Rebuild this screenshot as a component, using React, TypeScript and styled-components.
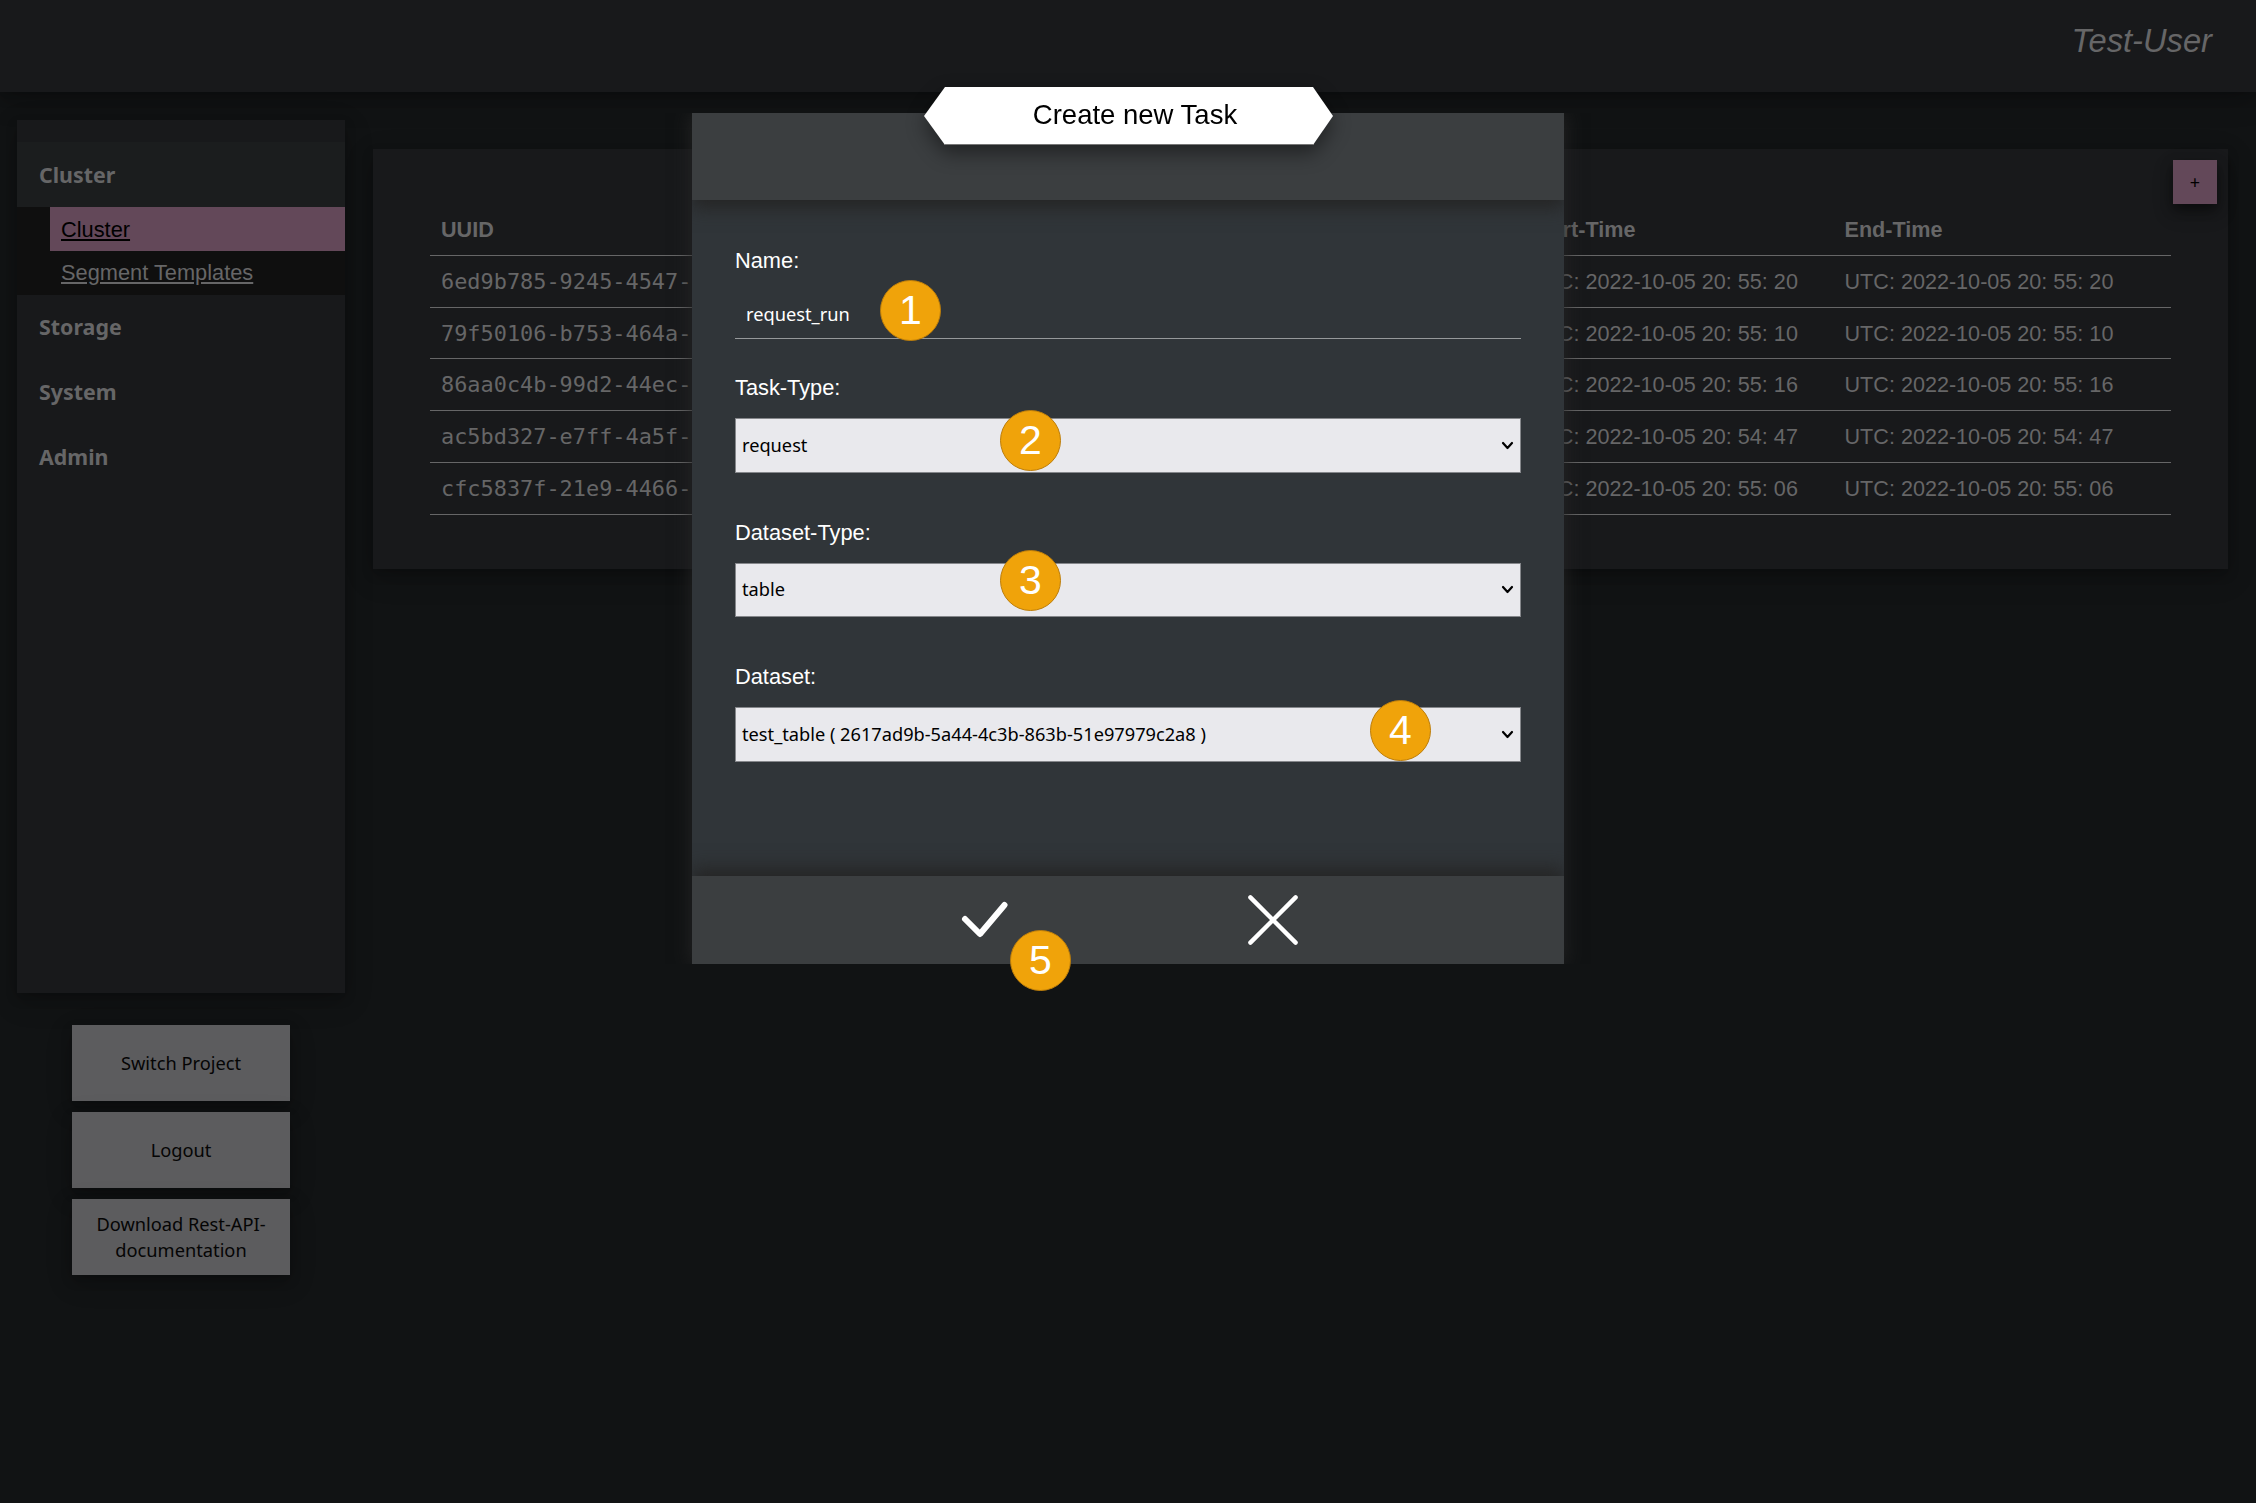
import React from "react";
import styled, { createGlobalStyle } from "styled-components";

const sans = `"Liberation Sans", Arial, sans-serif`;
const noto = `"Noto Sans", sans-serif`;
const elevation = "0 5px 11px rgba(0, 0, 0, 0.2), 0 8px 27px rgba(0, 0, 0, 0.19)";

const GlobalStyle = createGlobalStyle`
  * { box-sizing: border-box; }
  html { background: #fff; }
  body { margin: 0; font-family: ${sans}; font-size: 21.8px; color: #666667; }
  button, input { font: inherit; color: inherit; border: 0; padding: 0; margin: 0; }
`;

const Page = styled.div`
  position: relative;
  width: 2256px;
  height: 1503px;
  overflow: hidden;
  background: #111314;
`;

const Header = styled.header`
  display: flex;
  justify-content: flex-end;
  height: 92px;
  padding: 22px 44px 0 0;
  background: #18191b;
  box-shadow: ${elevation};
  font-size: 32.7px;
  line-height: 38px;
  font-style: italic;
`;

const Columns = styled.div`
  display: flex;
  align-items: flex-start;
  padding: 28px 28px 0 17px;
`;

const Left = styled.aside`
  width: 328px;
  margin-right: 28px;
`;

const Sidebar = styled.nav`
  height: 872.5px;
  padding-top: 22px;
  background: #18191b;
  box-shadow: ${elevation};
`;

const Group = styled.div<{ $open?: boolean }>`
  height: 65.4px;
  padding-left: 22px;
  font-family: ${noto};
  font-weight: 700;
  font-size: 21.4px;
  line-height: ${(p) => (p.$open ? 65 : 64.4)}px;
  background: ${(p) => (p.$open ? "#1b1d1e" : "transparent")};
`;

const SubMenu = styled.div`
  height: 87.2px;
  padding-left: 33px;
  background: #0f0f0f;
`;

const SubItem = styled.div<{ $active?: boolean }>`
  height: ${(p) => (p.$active ? 44 : 43)}px;
  padding-left: 11px;
  line-height: ${(p) => (p.$active ? 45 : 43)}px;
  text-decoration: underline;
  background: ${(p) => (p.$active ? "#634859" : "transparent")};
  color: ${(p) => (p.$active ? "#000" : "inherit")};
`;

const Actions = styled.div`
  display: flex;
  flex-direction: column;
  gap: 11px;
  width: 218px;
  margin: 32px 0 0 55px;
`;

const Action = styled.button`
  height: 76.3px;
  padding: 0 20px;
  background: #5c5c5e;
  color: #050505;
  font-family: ${noto};
  font-size: 18.25px;
  line-height: 26px;
  box-shadow: ${elevation};
`;

const Panel = styled.main`
  position: relative;
  flex: 1;
  height: 420px;
  margin-top: 29px;
  padding: 55px 57px 0 57px;
  background: #18191b;
  box-shadow: ${elevation};
`;

const AddButton = styled.button`
  position: absolute;
  top: 11px;
  right: 11px;
  width: 44px;
  height: 44px;
  background: #634859;
  color: #000;
  font-family: ${noto};
  font-size: 18px;
  box-shadow: 0 5px 11px rgba(0, 0, 0, 0.4), 0 8px 20px rgba(0, 0, 0, 0.25);
`;

const Row = styled.div<{ $head?: boolean }>`
  display: grid;
  grid-template-columns: 1088px 315.5px 1fr;
  height: 51.8px;
  padding-left: 11px;
  border-bottom: 1.5px solid #666667;
  line-height: 51px;
  white-space: nowrap;
  font-size: 21.6px;
  font-weight: ${(p) => (p.$head ? 700 : 400)};
`;

const Uuid = styled.span`
  font-family: "DejaVu Sans Mono", monospace;
  font-size: 21.9px;
`;

const Modal = styled.section`
  position: absolute;
  left: 692px;
  top: 113px;
  width: 872px;
  height: 851px;
  display: flex;
  flex-direction: column;
  background: #303539;
  color: #fff;
`;

const ModalGlow = styled(Modal)`
  box-shadow: 0 0 18px #252525;
  clip-path: inset(0 -30px 0 -30px);
`;

const ModalHead = styled.div`
  height: 87px;
  background: #3b3e40;
  box-shadow: 0 8px 17px #252525;
  clip-path: inset(0 0 -40px 0);
`;

const TitleShadow = styled.div`
  position: absolute;
  left: 232px;
  top: -26px;
  filter: drop-shadow(0 8px 10px rgba(0, 0, 0, 0.45));
`;

const Title = styled.h1`
  width: 409px;
  height: 58px;
  margin: 0;
  padding-left: 13px;
  background: #fff;
  border-bottom: 1px solid #777;
  color: #000;
  clip-path: polygon(21px 0, 389px 0, 100% 50%, 389px 100%, 21px 100%, 0 50%);
  font-size: 27.5px;
  font-weight: 400;
  line-height: 55px;
  text-align: center;
`;

const Form = styled.div`
  flex: 1;
  padding: 48px 43px 0;
`;

const Field = styled.div<{ $gap: number }>`
  margin-bottom: ${(p) => p.$gap}px;
`;

const Label = styled.label`
  display: block;
  height: 26px;
  line-height: 26px;
`;

const TextInput = styled.input`
  display: block;
  width: 100%;
  height: 53px;
  margin-top: 12px;
  padding: 3px 11px 0;
  background: transparent;
  border-bottom: 1.5px solid #96999b;
  outline: none;
  font-family: ${noto};
  font-size: 18.25px;
`;

const Select = styled.div`
  display: flex;
  align-items: center;
  justify-content: space-between;
  height: 54.6px;
  margin-top: 17px;
  padding: 0 6px 1px 6px;
  background: #e9e9ed;
  border: 1.5px solid #85878b;
  color: #000;
  font-family: ${noto};
  font-size: 18.22px;
`;

const ModalFoot = styled.div`
  display: flex;
  justify-content: center;
  align-items: center;
  gap: 238px;
  height: 88px;
  padding-left: 2px;
  background: #3b3e40;
  box-shadow: 0 -8px 17px #252525;
  clip-path: inset(-40px 0 0 0);
`;

const Marker = styled.div<{ $x: number; $y: number }>`
  position: absolute;
  left: ${(p) => p.$x - 30.5}px;
  top: ${(p) => p.$y - 30.5}px;
  width: 61px;
  height: 61px;
  border: 1.5px solid #bc7d0a;
  border-radius: 50%;
  background: #f0a30a;
  color: #fff;
  font-size: 41px;
  line-height: 59px;
  text-align: center;
`;

const Arrow = () => (
  <svg width="13" height="10" viewBox="0 0 13 10" fill="none">
    <path d="M2 3 L6.5 8 L11 3" stroke="#000" strokeWidth="2.2" strokeLinecap="round" strokeLinejoin="round" />
  </svg>
);

const Check = () => (
  <svg width="50" height="50" viewBox="0 0 50 50" fill="none">
    <path d="M6 24 L21 39 L45.5 10" stroke="#fff" strokeWidth="6" strokeLinecap="round" strokeLinejoin="round" />
  </svg>
);

const Cross = () => (
  <svg width="52" height="52" viewBox="0 0 52 52" fill="none">
    <path d="M3.4 3.4 L48.6 48.6 M48.6 3.4 L3.4 48.6" stroke="#fff" strokeWidth="4.4" strokeLinecap="round" />
  </svg>
);

const tasks = [
  ["6ed9b785-9245-4547-", "UTC: 2022-10-05 20: 55: 20"],
  ["79f50106-b753-464a-", "UTC: 2022-10-05 20: 55: 10"],
  ["86aa0c4b-99d2-44ec-", "UTC: 2022-10-05 20: 55: 16"],
  ["ac5bd327-e7ff-4a5f-", "UTC: 2022-10-05 20: 54: 47"],
  ["cfc5837f-21e9-4466-", "UTC: 2022-10-05 20: 55: 06"],
];

const selects = [
  ["Task-Type:", "request"],
  ["Dataset-Type:", "table"],
  ["Dataset:", "test_table ( 2617ad9b-5a44-4c3b-863b-51e97979c2a8 )"],
];

const markers = [
  [910.5, 310.5],
  [1030.5, 440.5],
  [1030.5, 580.5],
  [1400.5, 730.5],
  [1040.5, 960.5],
];

export default function App() {
  return (
    <>
      <GlobalStyle />
      <Page>
        <Header>Test-User</Header>
        <Columns>
          <Left>
            <Sidebar>
              <Group $open>Cluster</Group>
              <SubMenu>
                <SubItem $active>Cluster</SubItem>
                <SubItem>Segment Templates</SubItem>
              </SubMenu>
              <Group>Storage</Group>
              <Group>System</Group>
              <Group>Admin</Group>
            </Sidebar>
            <Actions>
              <Action>Switch Project</Action>
              <Action>Logout</Action>
              <Action>Download Rest-API-documentation</Action>
            </Actions>
          </Left>
          <Panel>
            <AddButton>+</AddButton>
            <Row $head>
              <span>UUID</span>
              <span>Start-Time</span>
              <span>End-Time</span>
            </Row>
            {tasks.map(([id, time]) => (
              <Row key={id}>
                <Uuid>{id}</Uuid>
                <span>{time}</span>
                <span>{time}</span>
              </Row>
            ))}
          </Panel>
        </Columns>
        <ModalGlow />
        <Modal>
          <ModalHead />
          <TitleShadow>
            <Title>Create new Task</Title>
          </TitleShadow>
          <Form>
            <Field $gap={36}>
              <Label>Name:</Label>
              <TextInput defaultValue="request_run" />
            </Field>
            {selects.map(([label, value]) => (
              <Field key={label} $gap={47}>
                <Label>{label}</Label>
                <Select>
                  {value}
                  <Arrow />
                </Select>
              </Field>
            ))}
          </Form>
          <ModalFoot>
            <Check />
            <Cross />
          </ModalFoot>
        </Modal>
        {markers.map(([x, y], i) => (
          <Marker key={i} $x={x} $y={y}>
            {i + 1}
          </Marker>
        ))}
      </Page>
    </>
  );
}
